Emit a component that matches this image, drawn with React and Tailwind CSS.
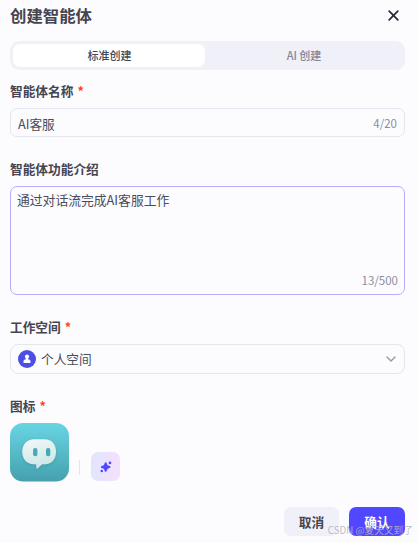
const counter = "text-[11.5px] leading-4 text-[#8b8e9d]";

function Label({ children, required, className = "" }) {
  return (
    <div className={`flex h-5 items-center text-[12.7px] font-bold text-[#45444f] ${className}`}>
      <span>{children}</span>
      {required && <span className="ml-[4px] text-[#ff441e]">*</span>}
    </div>
  );
}

function BotAvatar() {
  return (
    <svg className="h-[59px] w-[59px]" viewBox="0 0 59 59">
      <defs>
        <linearGradient id="avatarBg" x1="0" y1="0" x2="0" y2="1">
          <stop offset="0" stopColor="#68d5e3" />
          <stop offset="1" stopColor="#46a0ae" />
        </linearGradient>
        <linearGradient id="bubble" x1="0" y1="0" x2="0.3" y2="1">
          <stop offset="0" stopColor="#f3f8f7" />
          <stop offset="1" stopColor="#cde7e8" />
        </linearGradient>
        <filter id="bubbleShadow" x="-20%" y="-20%" width="140%" height="150%">
          <feDropShadow dx="0" dy="1" stdDeviation="1.5" floodColor="#2c7d8b" floodOpacity="0.4" />
        </filter>
      </defs>
      <rect width="59" height="58.5" rx="13" fill="url(#avatarBg)" />
      <path
        d="M24 16.3h11c6.600 0 11 5.200 11 12.400 0 7.400-4.400 12.500-11 12.500h-2.800l-4.800 4.200c-.6.400-1 .2-1-.5l-.2-3.700H24c-7 0-11.700-5.200-11.700-12.500S17 16.300 24 16.300z"
        fill="url(#bubble)"
        filter="url(#bubbleShadow)"
      />
      <rect x="23.100" y="25" width="4.300" height="8.200" rx="2" fill="#47a8b6" />
      <rect x="36" y="25" width="4.300" height="8.200" rx="2" fill="#47a8b6" />
    </svg>
  );
}

export default function App() {
  return (
    <div className="relative h-[543px] w-[418px] overflow-hidden bg-[#fcfcff] pl-[10px] pr-[13px] font-['Noto_Sans_CJK_SC',sans-serif]">
      {/* Header */}
      <div className="flex h-[41px] items-start justify-between pt-[3px]">
        <h1 className="text-[16.4px] font-bold leading-6 text-[#45444f]">创建智能体</h1>
        <svg className="mr-[6px] mt-[7px] h-[11px] w-[11px]" viewBox="0 0 11 11" fill="none" stroke="#292639" strokeWidth="1.700" strokeLinecap="round">
          <path d="M1.200 1.200l8.600 8.600M9.800 1.200L1.200 9.800" />
        </svg>
      </div>

      {/* Tabs */}
      <div className="flex h-[29px] rounded-[9px] bg-[#f0f0f9] p-[3px] text-[11px] font-medium">
        <div className="flex w-[192px] items-center justify-center rounded-[7px] bg-white pl-px text-[#454759]">标准创建</div>
        <div className="flex flex-1 items-center justify-center pl-px text-[#82869a]">AI 创建</div>
      </div>

      {/* Name */}
      <Label required className="mt-[11px]">智能体名称</Label>
      <div className="mt-[7px] flex h-[29px] items-center justify-between rounded-[7px] border border-[#e5e5ef] px-[7px]">
        <span className="pt-[2px] text-[12.700px] text-[#4a4b5b]">AI客服</span>
        <span className={counter}>4/20</span>
      </div>

      {/* Description */}
      <Label className="mt-[22px]">智能体功能介绍</Label>
      <div className="mt-[7px] flex h-[109px] flex-col justify-between rounded-[7px] border border-[#b5adff] px-[6px] pb-[6px] pt-[3px]">
        <p className="text-[12.800px] leading-5 text-[#4a4b5b]">通过对话流完成AI客服工作</p>
        <span className={`self-end ${counter}`}>13/500</span>
      </div>

      {/* Workspace */}
      <Label required className="mt-[22px]">工作空间</Label>
      <div className="mt-[7px] flex h-[30px] items-center rounded-[8px] border border-[#e5e5ef] pl-[7px] pr-[8px]">
        <svg className="h-[18px] w-[18px]" viewBox="0 0 18 18">
          <circle cx="9" cy="9" r="9" fill="#4c4ee5" />
          <circle cx="9" cy="6.700" r="2.100" fill="white" />
          <path d="M7.900 7.500h2.200v1.700c1.400.1 2.500 1 2.500 2.300v.8c0 .4-.3.700-.7.700H6.100c-.4 0-.7-.3-.7-.7v-.8c0-1.300 1.100-2.200 2.500-2.300z" fill="white" />
        </svg>
        <span className="ml-[5px] flex-1 text-[12.700px] text-[#4a4b5b]">个人空间</span>
        <svg className="h-[6px] w-[10px]" viewBox="0 0 10 6" fill="none" stroke="#9698a4" strokeWidth="1.400" strokeLinecap="round" strokeLinejoin="round">
          <path d="M1 1l4 4 4-4" />
        </svg>
      </div>

      {/* Icon */}
      <Label required className="mt-[22px]">图标</Label>
      <div className="mt-[7px] flex items-end">
        <BotAvatar />
        <div className="mb-[7px] ml-[10px] h-[15px] w-px bg-[#e4e4ee]" />
        <div className="ml-[11px] mb-px flex h-[29px] w-[29px] items-center justify-center rounded-[7px] bg-linear-to-r from-[#e2e5ff] to-[#f4e0fc]">
          <svg className="h-[12px] w-[12px]" viewBox="0 0 12 12" fill="#5147ff">
            <path d="M5.700 1.200c.6 0 .9.500 1.200 1.500.4 1.300.8 1.700 2.100 2.100 1 .3 1.500.6 1.500 1.200s-.5.900-1.500 1.200c-1.300.4-1.700.8-2.100 2.100-.3 1-.6 1.500-1.200 1.500s-.9-.5-1.200-1.500c-.4-1.300-.8-1.700-2.100-2.100C1.400 6.900.9 6.600.9 6s.5-.9 1.500-1.200c1.300-.4 1.700-.8 2.100-2.100.3-1 .6-1.500 1.200-1.500z" />
            <circle cx="10" cy="1.900" r="1.300" />
            <circle cx="1.800" cy="10" r="1.300" />
          </svg>
        </div>
      </div>

      {/* Footer */}
      <div className="mt-[25px] flex justify-end gap-[10px] text-[12.700px] font-bold">
        <button className="h-[29px] w-[55px] rounded-[7px] bg-[#f0f0f8] text-[#45444f]">取消</button>
        <button className="h-[29px] w-[56px] rounded-[7px] bg-[#5147ff] text-white">确认</button>
      </div>

      {/* Watermark */}
      <span className="absolute right-[5px] top-[523px] whitespace-nowrap text-[9.700px] leading-[15px] text-[#b4b4bc]/90">
        CSDN @夏天又到了
      </span>
    </div>
  );
}
